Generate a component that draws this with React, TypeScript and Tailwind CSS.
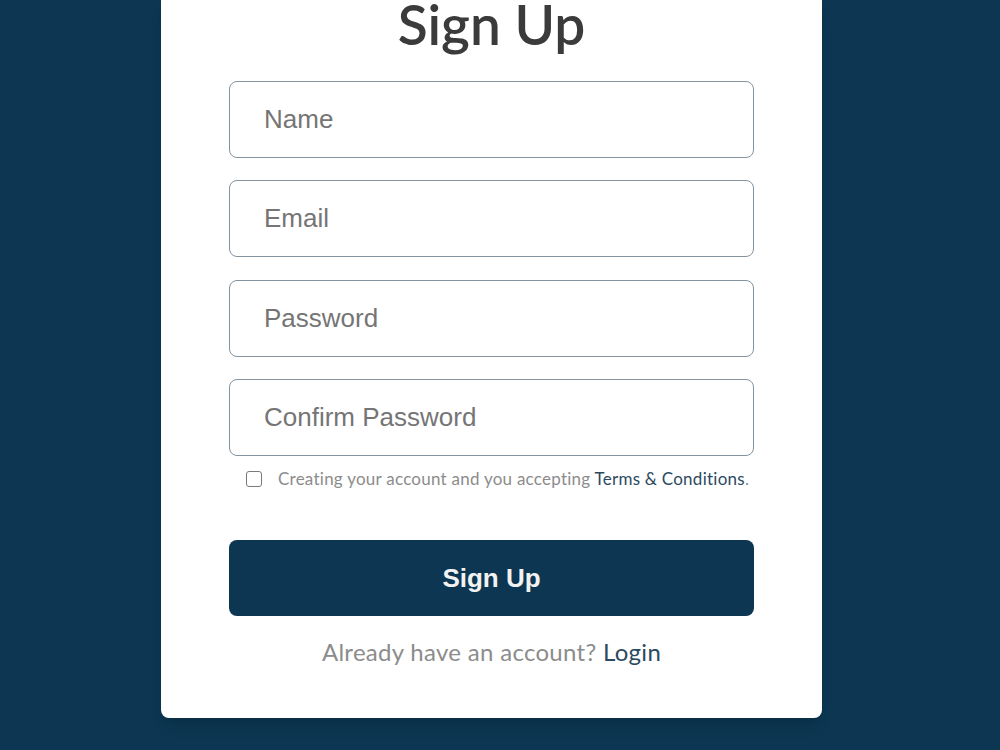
import { useState } from 'react';

export default function App() {
  const [agreed, setAgreed] = useState(false);

  const fields = ['Name', 'Email', 'Password', 'Confirm Password'];

  return (
    <div className="flex h-screen w-full justify-center overflow-hidden bg-[#0c3651] pr-[17px] font-['Lato',sans-serif]">
      {/* signup card */}
      <div className="h-fit w-[661px] rounded-b-[8px] bg-white px-[68px] pb-[48px] shadow-lg">
        <h1 className="mb-[33px] text-center text-[55px] font-semibold leading-[48px] text-[#3b3b3b]">Sign Up</h1>

        <form className="flex flex-col" onSubmit={(e) => e.preventDefault()}>
          <div className="flex flex-col gap-[22.3px]">
            {fields.map((f) => (
              <input
                key={f}
                type={f.includes('Password') ? 'password' : 'text'}
                placeholder={f}
                className="h-[77px] w-full rounded-[8px] border border-[#8493a0] bg-white px-[34px] font-['Liberation_Sans',Arial,sans-serif] text-[26px] text-[#333] outline-none placeholder:text-[#757575]"
              />
            ))}
          </div>

          <label className="mt-[10px] flex items-center gap-[16px] pl-[17px] text-[17px] tracking-[0.25px] text-[#8c8c8c]">
            <input
              type="checkbox"
              checked={agreed}
              onChange={() => setAgreed(!agreed)}
              className="h-[16px] w-[16px] shrink-0 appearance-none rounded-[3px] border border-[#7a7a7a] bg-white"
            />
            <span>
              Creating your account and you accepting <a className="text-[#2c4a5f]">Terms &amp; Conditions</a>.
            </span>
          </label>

          <button
            type="submit"
            className="mt-[49px] h-[76px] w-full rounded-[8px] bg-[#0c3651] font-['Liberation_Sans',Arial,sans-serif] text-[26px] font-bold text-[#f2f2f2]"
          >
            Sign Up
          </button>
        </form>

        <p className="mt-[18px] text-center text-[24px] tracking-[0.3px] text-[#8c8c8c]">
          Already have an account? <a className="text-[#2b4a60]">Login</a>
        </p>
      </div>
    </div>
  );
}
